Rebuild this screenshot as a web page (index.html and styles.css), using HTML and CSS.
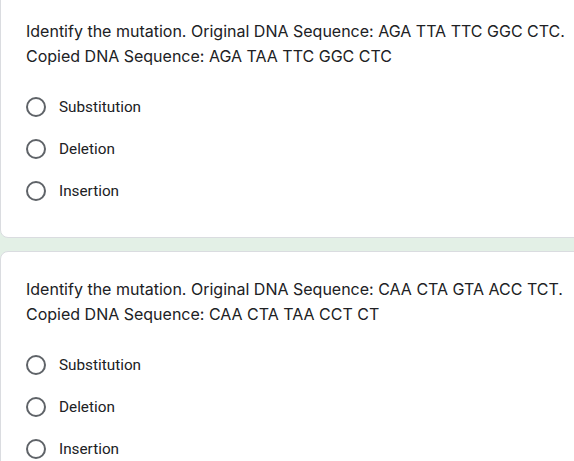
FILE: index.html
```html
<!DOCTYPE html>
<html>
<head>
<meta charset="utf-8">
<link rel="stylesheet" href="styles.css">
</head>
<body>
<div class="page">
  <div class="card first">
    <div class="question">Identify the mutation. Original DNA Sequence: AGA TTA TTC GGC CTC.<br>Copied DNA Sequence: AGA TAA TTC GGC CTC</div>
    <div class="options">
      <div class="option"><span class="radio"></span><span class="label">Substitution</span></div>
      <div class="option"><span class="radio"></span><span class="label">Deletion</span></div>
      <div class="option"><span class="radio"></span><span class="label">Insertion</span></div>
    </div>
  </div>
  <div class="card">
    <div class="question">Identify the mutation. Original DNA Sequence: CAA CTA GTA ACC TCT.<br>Copied DNA Sequence: CAA CTA TAA CCT CT</div>
    <div class="options">
      <div class="option"><span class="radio"></span><span class="label">Substitution</span></div>
      <div class="option"><span class="radio"></span><span class="label">Deletion</span></div>
      <div class="option"><span class="radio"></span><span class="label">Insertion</span></div>
    </div>
  </div>
</div>
</body>
</html>
```
FILE: styles.css
```css
html, body {
  margin: 0;
  padding: 0;
  background: #e3f0e6;
  overflow: hidden;
  height: 461px;
}
.page {
  width: 640px;
  display: flex;
  flex-direction: column;
  gap: 13px;
}
.card {
  background: #ffffff;
  border: 1px solid #dadce0;
  border-radius: 8px;
  padding: 25px 0 25px 25px;
}
.card.first {
  margin-top: -10px;
  padding-top: 28px;
}
.question {
  font-family: Inter, Roboto, sans-serif;
  font-size: 16px;
  line-height: 25px;
  color: #202124;
  white-space: nowrap;
  letter-spacing: 0;
}
.options {
  margin-top: 17px;
  display: flex;
  flex-direction: column;
}
.option {
  height: 42px;
  display: flex;
  align-items: center;
}
.radio {
  box-sizing: border-box;
  width: 20px;
  height: 20px;
  border: 2px solid #5f6368;
  border-radius: 50%;
  flex: none;
}
.label {
  margin-left: 13px;
  font-family: Roboto, "Noto Sans", sans-serif;
  font-size: 15.3px;
  color: #202124;
}
```
